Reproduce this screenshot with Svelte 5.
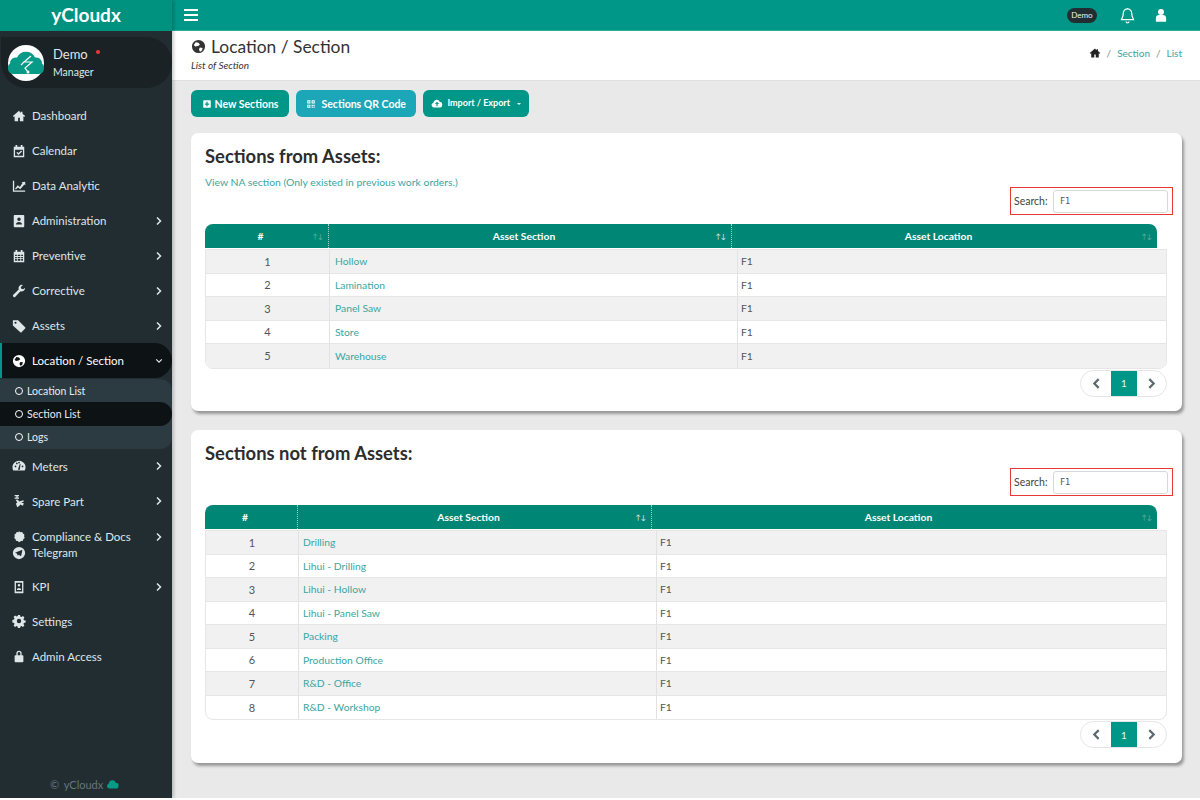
<script>
  const icons = {
    home: 'M8 2 1 8l1 1 1-.8V14h4v-4h2v4h4V8.2l1 .8 1-1-3-2.6V3h-2v1.7z',
    calendar: 'M4 1h2v2h4V1h2v2h2v12H2V3h2zM3.5 6.5v7h9v-7zM5 10l1-1 1.4 1.4L10.5 7.500l1 1-4.100 4z',
    chart: 'M1 2h1.500v11H15v1.500H1zM3.500 11l3-4 2.500 2 3-4.500-1.200-.8L15 3l.3 4-1.200-.8-4.700 5.500-2.500-2-2.500 2.300z',
    badge: 'M3 1h10a1 1 0 0 1 1 1v12a1 1 0 0 1-1 1H3a1 1 0 0 1-1-1V2a1 1 0 0 1 1-1zm5 3a2 2 0 1 0 0 4 2 2 0 0 0 0-4zM4.500 12h7c0-2-1.500-3-3.500-3s-3.500 1-3.500 3z',
    cal: 'M4 1h2v2h4V1h2v2h2v12H2V3h2zM3.500 6.500V8h2V6.500zm3 0V8h3V6.500zm4 0V8h2V6.500zm-7 2.500v1.500h2V9zm3 0v1.500h3V9zm4 0v1.500h2V9zm-7 2.500v2h2v-2zm3 0v2h3v-2zm4 0v2h2v-2z',
    wrench: 'M15 4.500a4 4 0 0 1-5.300 3.800L3.800 14.600a1.500 1.500 0 0 1-2.300-2.200l6.200-6A4 4 0 0 1 12.500 1L10 3.400 10.700 5.300 12.600 6z',
    tag: 'M1 1.500h6L15 9.500a1 1 0 0 1 0 1.400L10.900 15a1 1 0 0 1-1.400 0L1 7.500zM4 3a1.200 1.200 0 1 0 0 2.500A1.200 1.200 0 0 0 4 3z',
    globe: 'M8 1a7 7 0 1 0 0 14A7 7 0 0 0 8 1zM5 3.500l3 .5 1.500 2-2 1.500-3 .5-1.500-1.500zM9.500 9l3 .5-1 3-2 1-1-2.500z',
    meter: 'M8 2a7.500 7.500 0 0 0-6.500 11.200h13A7.500 7.500 0 0 0 8 2zM4 9.500a1 1 0 1 1 0-2 1 1 0 0 1 0 2zM5.500 6a1 1 0 1 1 0-2 1 1 0 0 1 0 2zM8 5a1 1 0 1 1 0-2 1 1 0 0 1 0 2zM12 9.500a1 1 0 1 1 0-2 1 1 0 0 1 0 2zM7 11.500l2-6 .8.2L9 11.500a1 1 0 1 1-2 0z',
    part: 'M3 1h5v1.500H6.500V4H8v1.500H3V4h2V2.500H3zM4 6.500h3l1 2 5-1.500.5 1.500-3 1.500 3 .5-1 3-3-1.500-1 1.500L6 15 4.500 11l1.500-1.500z',
    seal: 'M8 1.500l1.700 1 2-.2.8 1.800 1.700 1.100-.4 2 .7 1.800-1.500 1.400-.5 2-2 .3L8 14l-1.500-1.300-2-.3-.5-2L2.500 9l.7-1.800-.4-2L4.500 4.100l.8-1.800 2 .2z',
    telegram: 'M8 1a7 7 0 1 0 0 14A7 7 0 0 0 8 1zm3.800 4-1.300 6.200c-.1.400-.4.500-.7.300L7.800 10l-1 .9c-.2.200-.3.200-.4-.1L5.700 8.700 3.900 8.100c-.4-.1-.4-.4.100-.6L11.200 4.700c.4-.1.700.1.600.3z',
    kpi: 'M3 1h10v14H3zM4.500 3v10h7V3zM8 4.500a1.500 1.500 0 1 1 0 3 1.500 1.500 0 0 1 0-3zM5.500 11.500c0-1.500 1-2.500 2.500-2.500s2.500 1 2.500 2.500z',
    cog: 'M6.800 1h2.400l.4 2 1.200.5 1.700-1.100 1.700 1.700-1.100 1.700.5 1.200 2 .4v2.400l-2 .4-.5 1.200 1.100 1.700-1.700 1.700-1.700-1.100-1.200.5-.4 2H6.800l-.4-2-1.200-.5-1.700 1.100-1.700-1.700 1.100-1.700-.5-1.200-2-.4V6.800l2-.4.5-1.200-1.100-1.700 1.700-1.700 1.700 1.100 1.200-.5zM8 5.500a2.500 2.500 0 1 0 0 5 2.500 2.500 0 0 0 0-5z',
    lock: 'M5 7V5a3 3 0 0 1 6 0v2h1a1 1 0 0 1 1 1v6a1 1 0 0 1-1 1H4a1 1 0 0 1-1-1V8a1 1 0 0 1 1-1zm1.500 0h3V5a1.500 1.500 0 0 0-3 0z'
  };

  const nav = [
    { icon: 'home', label: 'Dashboard' },
    { icon: 'calendar', label: 'Calendar' },
    { icon: 'chart', label: 'Data Analytic' },
    { icon: 'badge', label: 'Administration', more: true },
    { icon: 'cal', label: 'Preventive', more: true },
    { icon: 'wrench', label: 'Corrective', more: true },
    { icon: 'tag', label: 'Assets', more: true },
    { icon: 'globe', label: 'Location / Section', open: true }
  ];
  const nav2 = [
    { icon: 'meter', label: 'Meters', more: true },
    { icon: 'part', label: 'Spare Part', more: true },
    { icon: 'seal', label: 'Compliance & Docs', more: true, tight: true },
    { icon: 'telegram', label: 'Telegram', tail: true },
    { icon: 'kpi', label: 'KPI', more: true, short: true },
    { icon: 'cog', label: 'Settings' },
    { icon: 'lock', label: 'Admin Access' }
  ];
  const subs = ['Location List', 'Section List', 'Logs'];

  const fromAssets = ['Hollow', 'Lamination', 'Panel Saw', 'Store', 'Warehouse'];
  const notFromAssets = ['Drilling', 'Lihui - Drilling', 'Lihui - Hollow', 'Lihui - Panel Saw', 'Packing', 'Production Office', 'R&D - Office', 'R&D - Workshop'];

  const cards = [
    { title: 'Sections from Assets:', link: 'View NA section (Only existed in previous work orders.)', rows: fromAssets, cls: 'first', numSort: true },
    { title: 'Sections not from Assets:', link: '', rows: notFromAssets, cls: 'second', numSort: false }
  ];
</script>

{#snippet icon(name)}
  <svg class="ico" viewBox="0 0 16 16"><path fill-rule="evenodd" d={icons[name]} /></svg>
{/snippet}

{#snippet navItem(item)}
  <div class="nav-item" class:open={item.open} class:tight={item.tight} class:tail={item.tail} class:short={item.short}>
    {@render icon(item.icon)}
    <span class="nav-label">{item.label}</span>
    {#if item.more}
      <svg class="chev" viewBox="0 0 8 10"><path d="M2 1.500 5.500 5 2 8.500" /></svg>
    {:else if item.open}
      <svg class="chev" viewBox="0 0 10 8"><path d="M1.500 2 5 5.500 8.500 2" /></svg>
    {/if}
  </div>
{/snippet}

<div class="app">
  <aside class="sidebar">
    <div class="brand">yCloudx</div>
    <div class="user">
      <div class="avatar">
        <svg viewBox="0 0 36 36" width="36" height="36">
          <circle cx="18" cy="18" r="18" fill="#fff" />
          <path d="M5 29a6 6 0 0 1-3-10.500 6 6 0 0 1 7-6 10 10 0 0 1 18 0 6 6 0 0 1 7 6A6 6 0 0 1 31 29z" fill="#079a86" />
          <path d="M23 11l-7 6h8l-7 6 3 4M13 20l3-3" fill="none" stroke="#fff" stroke-width="1.200" />
          <circle cx="20" cy="27" r="1.500" fill="#fff" />
        </svg>
      </div>
      <div class="user-text">
        <div class="user-name">Demo <span class="dot"></span></div>
        <div class="user-role">Manager</div>
      </div>
    </div>
    <nav class="nav">
      {#each nav as item}
        {@render navItem(item)}
      {/each}
      <div class="subs">
        {#each subs as sub, i}
          <div class="sub" class:current={i === 1}><span class="ring"></span>{sub}</div>
        {/each}
      </div>
      {#each nav2 as item}
        {@render navItem(item)}
      {/each}
    </nav>
    <div class="copy">
      <span class="copy-mark">©</span> yCloudx
      <svg viewBox="0 0 16 12" width="13" height="10"><path d="M4 11.500a3 3 0 0 1-.6-5.900A4 4 0 0 1 8 1.500a4 4 0 0 1 4 3 3.500 3.500 0 0 1 0 7z" fill="#079a86" /></svg>
    </div>
  </aside>

  <div class="main">
    <header class="topbar">
      <div class="burger"><span></span><span></span><span></span></div>
      <div class="top-right">
        <span class="demo-pill">Demo</span>
        <svg class="bell" viewBox="0 0 16 18"><path d="M8 2a4.500 4.500 0 0 0-4.500 4.500c0 4-1.500 5.500-2 7h13c-.5-1.500-2-3-2-7A4.500 4.500 0 0 0 8 2zM8 1v1M6.500 15.500a1.500 1.500 0 0 0 3 0" /></svg>
        <svg class="person" viewBox="0 0 14 16"><circle cx="7" cy="4.500" r="3.500" /><path d="M1 15v-3a4 4 0 0 1 4-4h4a4 4 0 0 1 4 4v3a1 1 0 0 1-1 1H2a1 1 0 0 1-1-1z" /></svg>
      </div>
    </header>

    <div class="page-head">
      <div>
        <h1 class="page-title">{@render icon('globe')}Location / Section</h1>
        <div class="page-sub">List of Section</div>
      </div>
      <div class="crumbs">
        {@render icon('home')}
        <span class="sep">/</span><span class="link">Section</span>
        <span class="sep">/</span><span class="link">List</span>
      </div>
    </div>

    <div class="content">
      <div class="actions">
        <div class="btn teal">
          <svg class="btn-ico" viewBox="0 0 16 16"><path fill-rule="evenodd" d="M3 2h10a1 1 0 0 1 1 1v10a1 1 0 0 1-1 1H3a1 1 0 0 1-1-1V3a1 1 0 0 1 1-1zm4 2.500V7H4.500v2H7v2.500h2V9h2.500V7H9V4.500z" /></svg>
          New Sections
        </div>
        <div class="btn cyan">
          <svg class="btn-ico" viewBox="0 0 16 16"><path fill-rule="evenodd" d="M2 2h5v5H2zm1.500 1.500v2h2v-2zM9 2h5v5H9zm1.500 1.500v2h2v-2zM2 9h5v5H2zm1.500 1.500v2h2v-2zM9 9h2v2H9zm3 0h2v2h-2zm-3 3h2v2H9zm3 0h2v2h-2z" /></svg>
          Sections QR Code
        </div>
        <div class="btn teal small">
          <svg class="cloud-ico" viewBox="0 0 20 14"><path fill-rule="evenodd" d="M5 13.500a4 4 0 0 1-1-7.900A5.500 5.500 0 0 1 14.500 4 4.800 4.800 0 0 1 15 13.500zM10 4 6.500 8H9v3.500h2V8h2.500z" /></svg>
          <span class="btn-up">Import / Export</span>
          <span class="caret"></span>
        </div>
      </div>

      {#each cards as card}
        <section class="card {card.cls}">
          <h2 class="card-title">{card.title}</h2>
          {#if card.link}
            <div class="na-link">{card.link}</div>
          {/if}
          <div class="search-row">
            <div class="search">
              <span>Search:</span>
              <div class="search-input">F1</div>
            </div>
          </div>
          <div class="thead">
            <div class="th">#{#if card.numSort}<span class="sort">↑↓</span>{/if}</div>
            <div class="th">Asset Section <span class="sort on">↑↓</span></div>
            <div class="th">Asset Location <span class="sort">↑↓</span></div>
          </div>
          <div class="tbody">
            {#each card.rows as row, i}
              <div class="tr">
                <div class="td num">{i + 1}</div>
                <div class="td link">{row}</div>
                <div class="td">F1</div>
              </div>
            {/each}
          </div>
          <div class="pager-row">
            <div class="pager">
              <span class="pg prev"><svg viewBox="0 0 8 10"><path d="M6 1 2 5l4 4" /></svg></span>
              <span class="pg active">1</span>
              <span class="pg"><svg viewBox="0 0 8 10"><path d="m2 1 4 4-4 4" /></svg></span>
            </div>
          </div>
        </section>
      {/each}
    </div>
  </div>
</div>

<style>
  :global(body) {
    margin: 0;
    background: #fff;
    font-family: Lato, "Open Sans", sans-serif;
  }

  .app {
    display: flex;
    width: 1200px;
    height: 798px;
    overflow: hidden;
  }

  .ico {
    width: 14px;
    height: 14px;
    fill: currentColor;
    flex: none;
  }

  /* sidebar */
  .sidebar {
    width: 172px;
    flex: none;
    display: flex;
    flex-direction: column;
    background: #222d32;
    color: #dfe6e8;
    box-shadow: 2px 0 3px rgba(0, 0, 0, 0.2);
    position: relative;
    z-index: 2;
  }

  .brand {
    height: 31px;
    line-height: 30px;
    background: #00917f;
    color: #fff;
    text-align: center;
    font-size: 19px;
    font-weight: 700;
  }

  .user {
    display: flex;
    align-items: center;
    gap: 9px;
    height: 51px;
    margin: 6px 0 0 1px;
    padding-left: 7px;
    background: #1a2226;
    border-radius: 0 26px 26px 26px;
  }

  .avatar {
    width: 36px;
    height: 36px;
    line-height: 0;
  }

  .user-name {
    font-size: 13px;
    color: #dfe6e8;
    line-height: 18px;
  }

  .dot {
    display: inline-block;
    width: 4px;
    height: 4px;
    border-radius: 50%;
    background: #f0353c;
    margin-left: 5px;
    vertical-align: 5px;
  }

  .user-role {
    font-size: 10.500px;
    line-height: 18px;
  }

  .nav {
    padding-top: 10px;
    flex: 1;
  }

  .nav-item {
    display: flex;
    align-items: center;
    height: 35px;
    padding-left: 12px;
    font-size: 11.500px;
    position: relative;
  }

  .nav-item.tight {
    height: 16px;
    margin-top: 10px;
  }

  .nav-item.tail {
    height: 16px;
    margin-bottom: 9px;
  }

  .nav-item.short {
    height: 34px;
  }

  .nav-label {
    margin-left: 6px;
  }

  .chev {
    position: absolute;
    right: 9px;
    top: 50%;
    width: 8px;
    height: 10px;
    margin-top: -5px;
    fill: none;
    stroke: #dfe6e8;
    stroke-width: 1.500;
  }

  .nav-item.open {
    background: #0d1215;
    border-left: 2px solid #009688;
    padding-left: 10px;
    border-radius: 0 18px 18px 0;
    color: #fff;
  }

  .subs {
    background: #2c3b41;
    border-radius: 0 12px 12px 0;
    margin-top: 1px;
  }

  .sub {
    display: flex;
    align-items: center;
    height: 23.300px;
    padding-left: 15px;
    font-size: 10.500px;
    color: #e6ecee;
  }

  .sub.current {
    background: #0d1215;
    border-radius: 0 12px 12px 0;
  }

  .ring {
    width: 6px;
    height: 6px;
    border: 1.500px solid #fff;
    border-radius: 50%;
    margin-right: 4px;
  }

  .copy {
    height: 20px;
    text-align: center;
    font-size: 11px;
    color: #66757b;
    padding-right: 3px;
  }

  .copy-mark {
    margin-right: 2px;
  }

  /* main */
  .main {
    flex: 1;
    min-width: 0;
    background: #e9e9e9;
    display: flex;
    flex-direction: column;
  }

  .topbar {
    height: 30px;
    flex: none;
    background: #009688;
    border-bottom: 1px solid #33ab9f;
    display: flex;
    align-items: center;
    justify-content: space-between;
    padding: 0 12px;
    color: #fff;
  }

  .burger {
    display: flex;
    flex-direction: column;
    gap: 3px;
    width: 14px;
  }

  .burger span {
    height: 2px;
    background: #fff;
  }

  .top-right {
    display: flex;
    align-items: center;
    padding-right: 21px;
  }

  .demo-pill {
    background: #222d32;
    border-radius: 8px;
    font-size: 8px;
    line-height: 15px;
    padding: 0 4.500px;
    color: #eee;
  }

  .bell {
    width: 15px;
    height: 17px;
    fill: none;
    stroke: #fff;
    stroke-width: 1.300;
    margin-left: 23px;
  }

  .person {
    width: 12px;
    height: 14px;
    fill: #fff;
    margin-left: 20px;
  }

  .page-head {
    height: 50px;
    flex: none;
    background: #fff;
    display: flex;
    justify-content: space-between;
    align-items: flex-start;
    padding: 4px 18px 0 19px;
    box-sizing: border-box;
    border-bottom: 1px solid #e0e0e0;
  }

  .page-title {
    margin: 0;
    display: flex;
    align-items: center;
    gap: 5px;
    font-size: 17.400px;
    line-height: 23px;
    font-weight: 400;
    color: #333;
  }

  .page-title .ico {
    width: 15px;
    height: 15px;
  }

  .page-sub {
    font-size: 10px;
    font-style: italic;
    line-height: 13px;
    color: #333;
    margin-top: 1px;
  }

  .crumbs {
    display: flex;
    align-items: center;
    gap: 6px;
    margin-top: 12px;
    font-size: 10px;
    color: #222;
  }

  .crumbs .ico {
    width: 12px;
    height: 12px;
  }

  .crumbs .sep {
    color: #888;
  }

  .link {
    color: #3aa6a0;
  }

  .content {
    padding: 9px 18px 0 19px;
  }

  .actions {
    display: flex;
    gap: 7px;
    margin-bottom: 16px;
  }

  .btn {
    display: flex;
    align-items: center;
    height: 27px;
    border-radius: 6px;
    color: #fff;
    font-size: 10.500px;
    font-weight: 700;
    padding: 0 10.500px;
    gap: 3px;
  }

  .btn.teal {
    background: #009688;
  }

  .btn.cyan {
    background: #1ca7b8;
    gap: 5px;
  }

  .btn.small {
    font-size: 9px;
    gap: 4px;
    padding: 0 8px;
  }

  .btn-up {
    margin-top: -2px;
  }

  .btn-ico {
    width: 10px;
    height: 10px;
    fill: #fff;
  }

  .cloud-ico {
    width: 12px;
    height: 9px;
    fill: #fff;
  }

  .caret {
    border: 2.500px solid transparent;
    border-top-color: #fff;
    border-bottom: 0;
    margin-left: 3px;
  }

  .card {
    background: #fff;
    border-radius: 7px;
    box-shadow: 2px 3px 3px rgba(0, 0, 0, 0.35);
    padding: 12px 14px 0;
    box-sizing: border-box;
    margin-bottom: 19px;
  }

  .card.first {
    height: 278px;
  }

  .card.second {
    height: 333px;
  }

  .card-title {
    margin: 0;
    font-size: 18.400px;
    line-height: 23px;
    font-weight: 700;
    color: #2d2d2d;
  }

  .na-link {
    font-size: 10.400px;
    line-height: 14px;
    color: #3aa6a0;
    margin-top: 7px;
  }

  .search-row {
    display: flex;
    justify-content: flex-end;
    margin: -2px -5px 9px 0;
  }

  .second .search-row {
    margin-top: 3px;
  }

  .search {
    display: flex;
    align-items: center;
    gap: 4px;
    height: 28px;
    box-sizing: border-box;
    border: 1.500px solid #e53935;
    padding: 0 4px 0 3.500px;
    font-size: 10.500px;
    color: #444;
  }

  .search span {
    width: 35px;
  }

  .search-input {
    width: 115px;
    height: 23px;
    line-height: 21px;
    box-sizing: border-box;
    border: 1.500px solid #d8d8d8;
    border-radius: 3px;
    padding-left: 6px;
    font-family: "DejaVu Sans Mono", monospace;
    font-size: 8.500px;
    color: #555;
  }

  .thead,
  .tr {
    display: grid;
  }

  .thead {
    width: 952px;
    height: 24px;
    background: #008675;
    border-radius: 8px 8px 0 0;
    color: #fff;
    font-size: 10.300px;
    font-weight: 700;
    margin-bottom: 1px;
  }

  .first .thead {
    grid-template-columns: 124px 403px 1fr;
  }

  .second .thead {
    grid-template-columns: 93px 354px 1fr;
  }

  .first .tr {
    grid-template-columns: 124px 408px 1fr;
  }

  .second .tr {
    grid-template-columns: 93px 358px 1fr;
  }

  .th {
    display: flex;
    align-items: center;
    justify-content: center;
    position: relative;
    padding-right: 12px;
    border-right: 1px dotted #9ad2ca;
  }

  .th:last-child {
    border-right: 0;
  }

  .sort {
    position: absolute;
    right: 5px;
    font-size: 7px;
    font-weight: 400;
    opacity: 0.35;
  }

  .sort.on {
    opacity: 0.9;
  }

  .tbody {
    width: 962px;
    box-sizing: border-box;
    border: 1px solid #e6e6e6;
    border-radius: 0 0 8px 8px;
    overflow: hidden;
    font-size: 10.300px;
    color: #555;
  }

  .tr {
    height: 23.500px;
    box-sizing: border-box;
    border-bottom: 1px solid #e6e6e6;
  }

  .tr:last-child {
    border-bottom: 0;
  }

  .tr:nth-child(odd) {
    background: #f1f1f1;
  }

  .td {
    display: flex;
    align-items: center;
    padding-left: 5px;
    border-right: 1px solid #e2e2e2;
  }

  .second .td {
    padding-left: 4px;
  }

  .td:last-child,
  .second .td:last-child {
    border-right: 0;
    padding-left: 3px;
  }

  .td.num,
  .second .td.num {
    justify-content: center;
    padding-left: 0;
    font-size: 11px;
  }

  .pager-row {
    display: flex;
    justify-content: flex-end;
    margin-top: 1px;
    width: 962px;
  }

  .pager {
    display: flex;
    height: 27px;
    box-sizing: border-box;
    border: 1px solid #e6e6e6;
    border-radius: 14px;
    overflow: hidden;
  }

  .pg {
    width: 29px;
    display: flex;
    align-items: center;
    justify-content: center;
    font-size: 10px;
  }

  .pg.prev {
    width: 30px;
  }

  .pg.active {
    width: 26px;
    background: #009688;
    color: #dff;
  }

  .pg svg {
    width: 9px;
    height: 11px;
    fill: none;
    stroke: #5c6b70;
    stroke-width: 2;
  }
</style>
